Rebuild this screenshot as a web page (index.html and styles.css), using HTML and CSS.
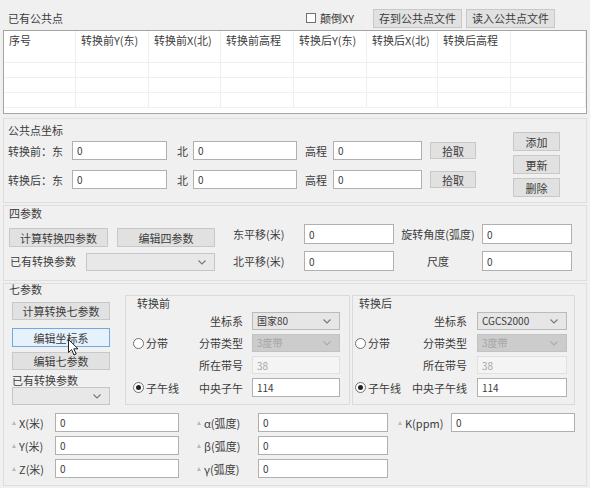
FILE: index.html
```html
<!DOCTYPE html>
<html lang="zh-CN">
<head>
<meta charset="utf-8">
<title>公共点</title>
<link rel="stylesheet" href="styles.css">
</head>
<body>
<div class="panel">
  <section class="s1">
    <div class="s1-head">
      <span class="title">已有公共点</span>
      <label class="chk"><span class="chkbox"></span>颠倒XY</label>
      <button class="btn b-file">存到公共点文件</button>
      <button class="btn b-file b-load">读入公共点文件</button>
    </div>
    <div class="tbl">
      <div class="th">序号</div><div class="th">转换前Y(东)</div><div class="th">转换前X(北)</div><div class="th">转换前高程</div><div class="th">转换后Y(东)</div><div class="th">转换后X(北)</div><div class="th">转换后高程</div><div class="th"></div>
      <div class="td"></div><div class="td"></div><div class="td"></div><div class="td"></div><div class="td"></div><div class="td"></div><div class="td"></div><div class="td"></div>
      <div class="td"></div><div class="td"></div><div class="td"></div><div class="td"></div><div class="td"></div><div class="td"></div><div class="td"></div><div class="td"></div>
      <div class="td"></div><div class="td"></div><div class="td"></div><div class="td"></div><div class="td"></div><div class="td"></div><div class="td"></div><div class="td"></div>
      <div class="td"></div><div class="td"></div><div class="td"></div><div class="td"></div><div class="td"></div><div class="td"></div><div class="td"></div><div class="td"></div>
    </div>
  </section>

  <section class="group s2">
    <div class="s2-main">
      <div class="gtitle t2">公共点坐标</div>
      <div class="prow">
        <span class="pl-a">转换前：东</span><input class="inp w95" value="0">
        <span class="pl-b">北</span><input class="inp w104" value="0">
        <span class="pl-c">高程</span><input class="inp w89" value="0">
        <button class="btn pick">拾取</button>
      </div>
      <div class="prow prow2">
        <span class="pl-a">转换后：东</span><input class="inp w95" value="0">
        <span class="pl-b">北</span><input class="inp w104" value="0">
        <span class="pl-c">高程</span><input class="inp w89" value="0">
        <button class="btn pick">拾取</button>
      </div>
    </div>
    <div class="s2-side">
      <button class="btn side">添加</button>
      <button class="btn side">更新</button>
      <button class="btn side">删除</button>
    </div>
  </section>

  <section class="group s3">
    <div class="gtitle t3">四参数</div>
    <div class="r4 r4a">
      <button class="btn b99">计算转换四参数</button>
      <button class="btn b98">编辑四参数</button>
      <span class="l71">东平移(米)</span><input class="inp w90 h20" value="0">
      <span class="l88">旋转角度(弧度)</span><input class="inp w90 h20" value="0">
    </div>
    <div class="r4 r4b">
      <span class="l76">已有转换参数</span>
      <div class="combo w129"><span></span><svg class="chev" width="8" height="5" viewBox="0 0 8 5"><polyline points="0.5,0.5 4,4 7.5,0.5"/></svg></div>
      <span class="l71">北平移(米)</span><input class="inp w90 h20" value="0">
      <span class="l88">尺度</span><input class="inp w90 h20" value="0">
    </div>
  </section>

  <section class="group s4">
    <div class="gtitle t4">七参数</div>
    <div class="s4-top">
      <div class="s4-left">
        <button class="btn b7">计算转换七参数</button>
        <button class="btn b7 hot">编辑坐标系</button>
        <button class="btn b7 b7c">编辑七参数</button>
        <div class="l7">已有转换参数</div>
        <div class="combo w98"><span></span><svg class="chev" width="8" height="5" viewBox="0 0 8 5"><polyline points="0.5,0.5 4,4 7.5,0.5"/></svg></div>
      </div>

      <div class="sub sub-before">
        <div class="subtitle">转换前</div>
        <div class="subgrid">
          <span></span><span class="slab">坐标系</span>
          <div class="combo"><span>国家80</span><svg class="chev" width="8" height="5" viewBox="0 0 8 5"><polyline points="0.5,0.5 4,4 7.5,0.5"/></svg></div>
          <label class="radio"><span class="rdot"></span>分带</label><span class="slab">分带类型</span>
          <div class="combo dis"><span>3度带</span><svg class="chev" width="8" height="5" viewBox="0 0 8 5"><polyline points="0.5,0.5 4,4 7.5,0.5"/></svg></div>
          <span></span><span class="slab">所在带号</span>
          <input class="inp dis-inp" value="38" disabled>
          <label class="radio"><span class="rdot on"></span>子午线</label><span class="slab">中央子午</span>
          <input class="inp" value="114">
        </div>
      </div>

      <div class="sub sub-after">
        <div class="subtitle">转换后</div>
        <div class="subgrid">
          <span></span><span class="slab">坐标系</span>
          <div class="combo"><span>CGCS2000</span><svg class="chev" width="8" height="5" viewBox="0 0 8 5"><polyline points="0.5,0.5 4,4 7.5,0.5"/></svg></div>
          <label class="radio"><span class="rdot"></span>分带</label><span class="slab">分带类型</span>
          <div class="combo dis"><span>3度带</span><svg class="chev" width="8" height="5" viewBox="0 0 8 5"><polyline points="0.5,0.5 4,4 7.5,0.5"/></svg></div>
          <span></span><span class="slab">所在带号</span>
          <input class="inp dis-inp" value="38" disabled>
          <label class="radio"><span class="rdot on"></span>子午线</label><span class="slab">中央子午线</span>
          <input class="inp" value="114">
        </div>
      </div>
    </div>

    <div class="s4-bottom">
      <span class="plab"><i class="tri"></i>X(米)</span><input class="inp" value="0">
      <span class="plab pa"><i class="tri"></i>α(弧度)</span><input class="inp" value="0">
      <span class="plab pk"><i class="tri"></i>K(ppm)</span><input class="inp" value="0">

      <span class="plab"><i class="tri"></i>Y(米)</span><input class="inp" value="0">
      <span class="plab pa"><i class="tri"></i>β(弧度)</span><input class="inp" value="0">
      <span></span><span></span>

      <span class="plab"><i class="tri"></i>Z(米)</span><input class="inp" value="0">
      <span class="plab pa"><i class="tri"></i>γ(弧度)</span><input class="inp" value="0">
      <span></span><span></span>
    </div>
  </section>

  <svg class="cursor" width="11" height="17" viewBox="0 0 11 17"><path d="M0.5,0.5 L0.5,13.5 L3.6,10.6 L6,16 L8.2,15 L5.8,9.8 L10,9.8 Z"/></svg>
</div>
</body>
</html>
```

FILE: styles.css
```css
* { box-sizing: border-box; }

body {
  margin: 0;
  background: #ffffff;
  font-family: "Noto Sans CJK SC", "Microsoft YaHei", "Liberation Sans", sans-serif;
  font-size: 11px;
  line-height: 14px;
  color: #3c3c3c;
}

.panel {
  position: relative;
  width: 590px;
  height: 488px;
  background: #f0f0f0;
  overflow: hidden;
}

button, input {
  font-family: inherit;
  font-size: 11px;
  color: #3c3c3c;
  margin: 0;
}

.btn {
  display: block;
  padding: 0;
  background: #e1e1e1;
  border: 1px solid #c8c8c8;
  line-height: 14px;
  text-align: center;
  white-space: nowrap;
}

.inp {
  display: block;
  height: 19px;
  padding: 0 4px;
  background: #ffffff;
  border: 1px solid #b0b0b0;
  outline: none;
  font-size: 10px;
}

.combo {
  position: relative;
  display: flex;
  align-items: center;
  height: 18px;
  padding: 0 4px;
  background: #e6e6e6;
  border: 1px solid #bababa;
  white-space: nowrap;
  font-size: 10px;
}
.combo .chev {
  position: absolute;
  right: 8px;
  top: 6px;
}
.chev polyline {
  fill: none;
  stroke: #777777;
  stroke-width: 1.1;
}
.combo.dis {
  background: #cccccc;
  border-color: #c2c2c2;
  color: #a6a6a6;
}
.combo.dis .chev polyline { stroke: #ababab; }

.dis-inp {
  background: #f4f4f4;
  border-color: #e0e0e0;
  color: #a6a6a6;
}

/* ---------- section 1 ---------- */
.s1 {
  height: 116px;
}
.s1-head {
  display: flex;
  align-items: center;
  height: 30px;
  padding-top: 6px;
  padding-left: 8px;
}
.s1-head .title {
  flex: 1;
}
.chk {
  display: flex;
  align-items: center;
  width: 67px;
}
.chkbox {
  width: 10px;
  height: 10px;
  margin-right: 4px;
  background: #ffffff;
  border: 1px solid #707070;
}
.b-file {
  width: 89px;
  height: 19px;
}
.b-load {
  margin-left: 4px;
  margin-right: 35px;
}

.tbl {
  display: grid;
  grid-template-columns: 72px 73px 72px 73px 73px 71px 73px 1fr;
  grid-template-rows: 17px repeat(4, 15px);
  align-content: start;
  margin-left: 3px;
  width: 584px;
  height: 84px;
  background: #ffffff;
  border: 1px solid #a4a4a4;
}
.th, .td {
  border-right: 1px solid #efefef;
}
.th {
  padding-left: 5px;
  padding-top: 2px;
  line-height: 14px;
  white-space: nowrap;
}
.td {
  border-bottom: 1px solid #f0f0f0;
}

/* ---------- group boxes ---------- */
.group {
  margin: 2px 0 0 3px;
  width: 584px;
  border: 1px solid #dedede;
}
.gtitle {
  line-height: 14px;
}

/* ---------- section 2 ---------- */
.s2 {
  display: flex;
  height: 85px;
}
.s2-main {
  flex: 1;
  padding-left: 4px;
}
.t2 { padding-top: 4px; }
.prow {
  display: flex;
  align-items: center;
  height: 19px;
  margin-top: 4px;
}
.prow2 { margin-top: 10px; }
.pl-a { width: 64px; white-space: nowrap; }
.pl-b { width: 16px; margin-left: 10px; }
.pl-c { width: 28px; margin-left: 8px; }
.w95 { width: 95px; }
.w104 { width: 104px; }
.w89 { width: 89px; }
.pick {
  width: 46px;
  height: 17px;
  margin-left: 8px;
}
.s2-side {
  width: 47px;
  margin-right: 26px;
  padding-top: 13px;
}
.side {
  width: 47px;
  height: 19px;
  margin-bottom: 4px;
}

/* ---------- section 3 ---------- */
.s3 {
  height: 76px;
  padding-left: 5px;
}
.r4 {
  display: flex;
  align-items: flex-start;
  margin-top: 4px;
}
.r4a { height: 23px; }
.r4b { height: 20px; }
.b99 { width: 99px; height: 19px; margin-top: 4px; }
.b98 { width: 98px; height: 19px; margin-top: 4px; margin-left: 9px; }
.l71 { width: 71px; margin-left: 18px; line-height: 20px; white-space: nowrap; }
.l88 { width: 88px; text-align: center; line-height: 20px; white-space: nowrap; }
.l76 { width: 76px; margin-left: 1px; line-height: 20px; white-space: nowrap; }
.w90 { width: 90px; }
.h20 { height: 20px; }
.w129 { width: 129px; margin-top: 2px; background: #e8e8e8; border-color: #c6c6c6; }

/* ---------- section 4 ---------- */
.s4 {
  height: 203px;
}
.t4 {
  height: 11px;
  line-height: 11px;
  padding-left: 5px;
}
.s4-top {
  display: flex;
  height: 110px;
}
.s4-left {
  width: 98px;
  margin-left: 8px;
  padding-top: 7px;
}
.b7 {
  width: 98px;
  height: 18px;
}
.hot {
  margin-top: 8px;
  height: 19px;
  background: #e5f1fb;
  border-color: #72aae0;
}
.b7c { margin-top: 5px; }
.l7 {
  margin-top: 3px;
  white-space: nowrap;
}
.w98 { width: 98px; background: #e8e8e8; border-color: #c6c6c6; }

.sub {
  height: 110px;
  border: 1px solid #dadada;
}
.sub-before {
  width: 225px;
  margin-left: 15px;
  padding-left: 7px;
}
.sub-after {
  width: 223px;
  margin-left: 2px;
  padding-left: 2px;
}
.subtitle {
  line-height: 14px;
  padding-left: 4px;
}
.subgrid {
  display: grid;
  grid-template-rows: 18px 18px 18px 19px;
  row-gap: 4px;
  align-items: center;
  margin-top: 2px;
}
.sub-before .subgrid { grid-template-columns: 55px 64px 88px; }
.sub-after .subgrid { grid-template-columns: 50px 72px 90px; }
.slab {
  text-align: right;
  padding-right: 9px;
  white-space: nowrap;
}
.sub-after .slab { padding-right: 10px; }
.subgrid .combo,
.subgrid .inp {
  width: 100%;
  height: 100%;
}
.radio {
  display: flex;
  align-items: center;
  white-space: nowrap;
}
.rdot {
  position: relative;
  width: 11px;
  height: 11px;
  margin-right: 2px;
  border-radius: 50%;
  background: #ffffff;
  border: 1px solid #707070;
}
.rdot.on::after {
  content: "";
  position: absolute;
  left: 2px;
  top: 2px;
  width: 5px;
  height: 5px;
  border-radius: 50%;
  background: #222222;
}

.s4-bottom {
  display: grid;
  grid-template-columns: 43px 124px 79px 130px 63px 124px;
  grid-template-rows: 19px 19px 19px;
  row-gap: 4px;
  align-items: center;
  margin-top: 8px;
  padding-left: 8px;
}
.s4-bottom .inp {
  width: 100%;
  height: 100%;
}
.plab {
  display: flex;
  align-items: center;
  white-space: nowrap;
}
.pa { padding-left: 18px; }
.pk { padding-left: 10px; }
.tri {
  display: inline-block;
  width: 0;
  height: 0;
  margin-right: 3px;
  border-left: 2.5px solid transparent;
  border-right: 2.5px solid transparent;
  border-bottom: 4px solid #b8b8b8;
}

.cursor {
  position: absolute;
  left: 68px;
  top: 339px;
}
.cursor path {
  fill: #ffffff;
  stroke: #222222;
  stroke-width: 1;
  stroke-linejoin: round;
}
```
